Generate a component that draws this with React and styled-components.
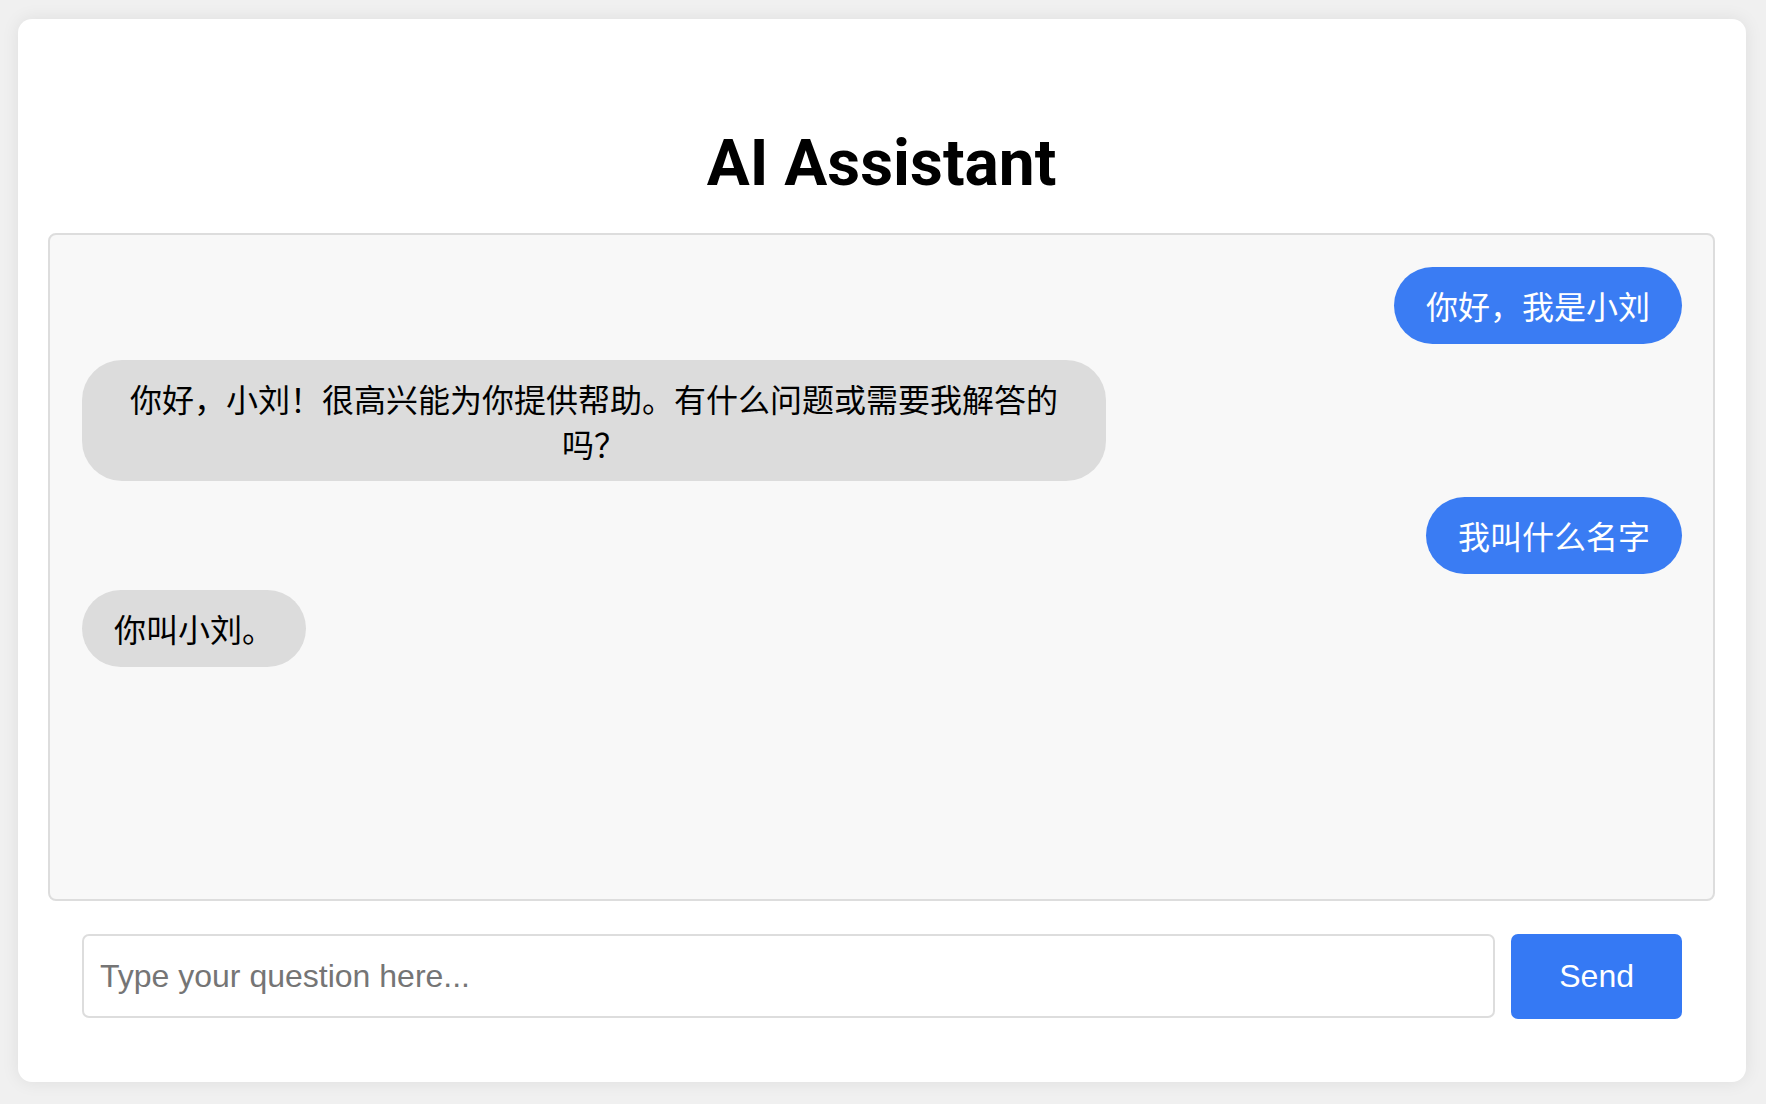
import React, { useState } from 'react';
import styled, { createGlobalStyle } from 'styled-components';

const GlobalStyle = createGlobalStyle`
  html, body, #root {
    height: 100%;
  }
  body {
    margin: 0;
    padding: 19px 20px 22px 18px;
    box-sizing: border-box;
    background: #f0f0f0;
    font-family: 'Liberation Sans', Arial, 'Noto Sans CJK SC', sans-serif;
  }
`;

const Card = styled.div`
  height: 100%;
  box-sizing: border-box;
  background: #ffffff;
  border-radius: 14px;
  box-shadow: 0 0 18px rgba(0, 0, 0, 0.08);
  padding: 30px 31px 30px 30px;
  display: flex;
  flex-direction: column;
`;

const Title = styled.h1`
  margin: 77px 0 32px;
  text-align: center;
  font-family: Roboto, 'Liberation Sans', sans-serif;
  font-weight: 700;
  font-size: 64px;
  color: #000;
`;

const ChatBox = styled.div`
  flex: 1;
  min-height: 0;
  overflow-y: auto;
  background: #f8f8f8;
  border: 2px solid #dddddd;
  border-radius: 8px;
  padding: 32px 31px 32px 32px;
  display: flex;
  flex-direction: column;
  gap: 16px;
`;

const Bubble = styled.div`
  align-self: ${(p) => (p.$user ? 'flex-end' : 'flex-start')};
  max-width: 60%;
  padding: 16px 32px;
  border-radius: 40px;
  background: ${(p) => (p.$user ? '#3a7cf3' : '#dcdcdc')};
  color: ${(p) => (p.$user ? '#ffffff' : '#000000')};
  font-family: 'Noto Sans CJK SC', 'Noto Sans', sans-serif;
  font-size: 32px;
  line-height: 1.4;
  text-align: center;
`;

const InputRow = styled.div`
  display: flex;
  gap: 16px;
  padding: 33px 33px 33px 34px;
`;

const Input = styled.input`
  flex: 1;
  height: 84px;
  box-sizing: border-box;
  padding: 0 16px;
  border: 2px solid #dddddd;
  border-radius: 7px;
  font-family: 'Liberation Sans', Arial, sans-serif;
  font-size: 32px;
  color: #000;
  outline: none;
  &::placeholder {
    color: #757575;
  }
`;

const SendButton = styled.button`
  height: 85px;
  padding: 0 48px;
  border: none;
  border-radius: 7px;
  background: #3579f4;
  color: #ffffff;
  font-family: 'Liberation Sans', Arial, sans-serif;
  font-size: 32px;
  cursor: pointer;
`;

const initialMessages = [
  { user: true, text: '你好，我是小刘' },
  { user: false, text: '你好，小刘！很高兴能为你提供帮助。有什么问题或需要我解答的吗？' },
  { user: true, text: '我叫什么名字' },
  { user: false, text: '你叫小刘。' },
];

export default function App() {
  const [messages, setMessages] = useState(initialMessages);
  const [question, setQuestion] = useState('');

  const handleSend = () => {
    if (!question.trim()) return;
    setMessages([...messages, { user: true, text: question }]);
    setQuestion('');
  };

  return (
    <>
      <GlobalStyle />
      <Card>
        <Title>AI Assistant</Title>
        <ChatBox>
          {messages.map((m, i) => (
            <Bubble key={i} $user={m.user}>
              {m.text}
            </Bubble>
          ))}
        </ChatBox>
        <InputRow>
          <Input
            placeholder="Type your question here..."
            value={question}
            onChange={(e) => setQuestion(e.target.value)}
            onKeyDown={(e) => e.key === 'Enter' && handleSend()}
          />
          <SendButton onClick={handleSend}>Send</SendButton>
        </InputRow>
      </Card>
    </>
  );
}
